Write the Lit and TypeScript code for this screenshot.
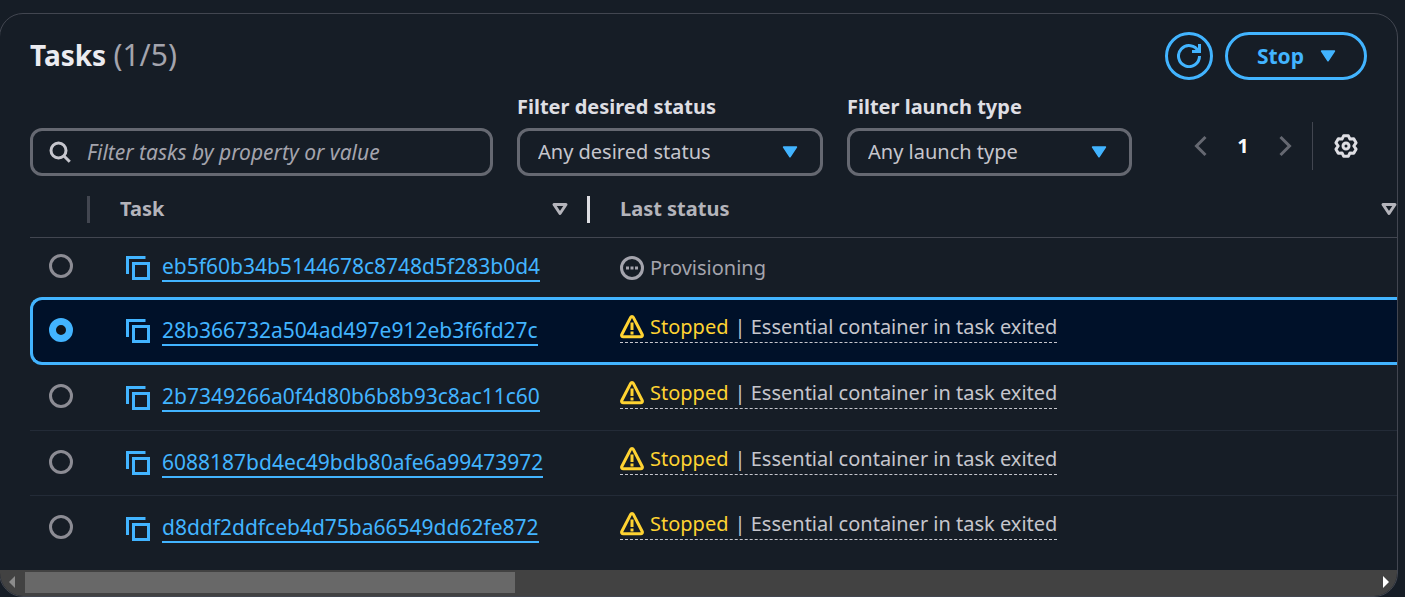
import { LitElement, html, css, svg } from "lit";
import { customElement, state } from "lit/decorators.js";
import { classMap } from "lit/directives/class-map.js";

interface Task {
  id: string;
  status: "Provisioning" | "Stopped";
  reason?: string;
}

const TASKS: Task[] = [
  { id: "eb5f60b34b5144678c8748d5f283b0d4", status: "Provisioning" },
  { id: "28b366732a504ad497e912eb3f6fd27c", status: "Stopped", reason: "Essential container in task exited" },
  { id: "2b7349266a0f4d80b6b8b93c8ac11c60", status: "Stopped", reason: "Essential container in task exited" },
  { id: "6088187bd4ec49bdb80afe6a99473972", status: "Stopped", reason: "Essential container in task exited" },
  { id: "d8ddf2ddfceb4d75ba66549dd62fe872", status: "Stopped", reason: "Essential container in task exited" },
];

const ICONS = {
  refresh: svg`<path d="M10 5h5V0"/><path d="M15 8a7 7 0 1 1-.7-3"/>`,
  search: svg`<circle cx="7" cy="7" r="5"/><path d="m10.500 10.500 4 4"/>`,
  caret: svg`<path class="solid" d="M3.700 4.700h8.600L8 11.200z"/>`,
  sort: svg`<path class="round-join" d="M4 5h8l-4 6z"/>`,
  prev: svg`<path d="M11 2 5 8l6 6"/>`,
  next: svg`<path d="m5 2 6 6-6 6"/>`,
  copy: svg`<path d="M5 5h10v10H5z"/><path d="M13 1H1v11"/>`,
  pending: svg`<circle cx="8" cy="8" r="7"/><path d="M4 8h2M7 8h2M10 8h2"/>`,
  warning: svg`<path class="round-join" d="M7.100 1.600 1.200 13c-.4.8.1 1.500 1 1.500h11.600c.9 0 1.400-.7 1-1.500L8.900 1.600c-.4-.8-1.400-.8-1.800 0Z"/><path d="M8 5v5M8 11v2"/>`,
  gear: svg`<path class="round-join" d="M6.400 1.200h3.200l1.050 2.200 2.500-.2 1.550 2.700L13.200 8l1.500 2.100-1.550 2.700-2.500-.2-1.050 2.200H6.400l-1.050-2.200-2.500.2-1.550-2.700L2.800 8 1.300 5.900l1.550-2.700 2.500.2z"/><circle cx="8" cy="8" r="2"/>`,
};

const icon = (name: keyof typeof ICONS) => html`
  <svg class="icon" viewBox="0 0 16 16" aria-hidden="true">${ICONS[name]}</svg>
`;

@customElement("app-root")
export class AppRoot extends LitElement {
  @state() private selected = TASKS[1].id;

  static styles = css`
    :host {
      display: block;
      box-sizing: border-box;
      min-height: 100vh;
      padding: 13px 7px 0 0;
      overflow: hidden;
      background: #161d26;
      color: #c6c6cd;
      font: 20px/30px "Noto Sans", "Open Sans", sans-serif;
    }
    *, *::before, *::after { box-sizing: border-box; }
    button, input, select { font: inherit; color: inherit; background: none; border: 0; margin: 0; padding: 0; }
    button, select { cursor: pointer; }
    .icon { display: block; flex: none; width: 24px; height: 24px; fill: none; stroke: currentColor; stroke-width: 2; }
    .solid { fill: currentColor; stroke-width: 1; stroke-linejoin: round; }
    .round-join { stroke-linejoin: round; }

    .card {
      overflow: hidden;
      margin-left: -1px;
      border: 1px solid #424650;
      border-radius: 24px;
    }
    .header { display: flex; align-items: flex-start; justify-content: space-between; padding: 18px 30px 0; }
    .title { margin: 5px 0 0; color: #ebebf0; font-size: 28px; line-height: 36px; font-weight: 700; }
    .count { color: #a4a4ad; font-size: 30px; font-weight: 400; }
    .actions { display: flex; gap: 12px; }
    .action {
      display: flex; align-items: center; justify-content: center; gap: 12px;
      height: 48px; border: 3px solid #42b4ff; border-radius: 24px;
      color: #42b4ff; font-weight: 700;
    }
    .round { width: 48px; }
    .menu { padding: 0 24px 0 29px; font-size: 21px; }

    .toolbar { display: flex; align-items: flex-end; gap: 24px; padding: 12px 30px 0; }
    .box { height: 48px; border: 3px solid #656871; border-radius: 12px; }
    .search-box { display: flex; align-items: center; gap: 15px; flex: 0 1 463px; padding: 0 15px; }
    .query { flex: 1; min-width: 0; outline: none; font-size: 21px; }
    .query::placeholder { color: #a4a4ad; opacity: 1; font-style: italic; }
    .filter { display: grid; gap: 6px; }
    .filter-status { flex: 0 1 306px; }
    .filter-launch { flex: 0 1 285px; }
    .label { color: #dedee3; font-weight: 700; }
    .picker { position: relative; }
    .select { display: block; width: 100%; appearance: none; padding: 0 48px 0 18px; }
    .arrow { position: absolute; right: 21px; top: 12px; color: #42b4ff; pointer-events: none; }
    .pager { display: flex; align-items: center; margin: 0 0 6px auto; }
    .pages { display: flex; align-items: center; gap: 18px; padding-right: 15px; border-right: 1px solid #424650; height: 48px; color: #656871; }
    .page { width: 24px; color: #f9f9fb; font-weight: 700; text-align: center; }
    .settings { padding: 0 9px 0 21px; color: #dedee3; }

    .viewport { overflow: hidden; margin-left: 30px; padding-bottom: 9px; }
    .table { width: calc(100% + 30px); table-layout: fixed; border-collapse: separate; border-spacing: 0; }
    .pick { width: 60px; }
    .task { width: 500px; }
    .th { height: 62px; padding: 6px 0 0; border-bottom: 1px solid #424650; color: #b4b4bb; text-align: left; font-weight: 700; line-height: 24px; }
    .th-in { display: flex; align-items: center; justify-content: space-between; height: 27px; padding: 0 15px 1px 30px; border-right: 3px solid #dedee3; }
    .th-in.muted { border-color: #424650; }
    .th-in.last { border: 0; padding-right: 26px; }
    .cell { height: 65px; padding: 0 0 0 30px; border-bottom: 1px solid #232b37; }
    .row:first-child .cell { height: 59px; border-bottom: 0; }
    .row:last-child .cell { border-bottom: 0; }
    .cell.choice { padding: 0 0 3px 19px; }
    .row.active .cell { height: 68px; background: #001129; border: solid #42b4ff; border-width: 3px 0; }
    .row.active + .row .cell { height: 66px; }
    .row.active .choice { padding-left: 16px; border-left-width: 3px; border-radius: 12px 0 0 12px; }
    .radio { display: block; appearance: none; width: 24px; height: 24px; border: 3px solid #8c8c94; border-radius: 50%; }
    .radio:checked { border: 7px solid #42b4ff; background: #0f141a; }
    .ident { display: flex; align-items: center; gap: 12px; padding-left: 6px; color: #42b4ff; }
    .link { color: #42b4ff; font-size: 21px; line-height: 27px; text-decoration: none; border-bottom: 2px solid #42b4ff; }
    .state { display: flex; align-items: center; gap: 6px; color: #a4a4ad; }
    .reason { display: flex; width: max-content; margin-bottom: 8px; border-bottom: 1px dashed #c6c6cd; color: #c6c6cd; line-height: 30px; }
    .reason .state { color: #ffd332; margin-right: 6px; }

    .scrollbar { display: flex; align-items: flex-start; height: 26px; padding: 2px 8px 0 9px; background: #424242; }
    .tip { width: 6px; height: 12px; margin-top: 4px; fill: #8b8b8b; flex: none; }
    .tip.on { fill: #fff; margin-left: auto; }
    .thumb { flex: 0 1 490px; height: 21px; margin-left: 10px; background: #686868; }
  `;

  private renderStatus(t: Task) {
    if (!t.reason) return html`<span class="state">${icon("pending")}${t.status}</span>`;
    return html`
      <button class="reason" type="button">
        <span class="state">${icon("warning")}${t.status}</span>| ${t.reason}
      </button>`;
  }

  private renderRow(t: Task) {
    const active = t.id === this.selected;
    return html`
      <tr class=${classMap({ row: true, active })}>
        <td class="cell choice">
          <input class="radio" type="radio" name="task" aria-label=${t.id} .checked=${active}
            @change=${() => (this.selected = t.id)} />
        </td>
        <td class="cell">
          <div class="ident">
            <button type="button" aria-label="Copy">${icon("copy")}</button>
            <a class="link" href="#${t.id}">${t.id}</a>
          </div>
        </td>
        <td class="cell">${this.renderStatus(t)}</td>
      </tr>`;
  }

  render() {
    return html`
      <section class="card">
        <header class="header">
          <h2 class="title">Tasks <span class="count">(1/5)</span></h2>
          <div class="actions">
            <button class="action round" type="button" aria-label="Refresh">${icon("refresh")}</button>
            <button class="action menu" type="button">Stop ${icon("caret")}</button>
          </div>
        </header>

        <div class="toolbar">
          <label class="box search-box">
            ${icon("search")}
            <input class="query" type="text" aria-label="Filter tasks" placeholder="Filter tasks by property or value" />
          </label>
          <div class="filter filter-status">
            <label class="label" for="status">Filter desired status</label>
            <div class="picker">
              <select class="box select" id="status"><option>Any desired status</option></select>
              <span class="arrow">${icon("caret")}</span>
            </div>
          </div>
          <div class="filter filter-launch">
            <label class="label" for="launch">Filter launch type</label>
            <div class="picker">
              <select class="box select" id="launch"><option>Any launch type</option></select>
              <span class="arrow">${icon("caret")}</span>
            </div>
          </div>
          <div class="pager">
            <div class="pages">
              <button type="button" aria-label="Previous page">${icon("prev")}</button>
              <button class="page" type="button">1</button>
              <button type="button" aria-label="Next page">${icon("next")}</button>
            </div>
            <button class="settings" type="button" aria-label="Preferences">${icon("gear")}</button>
          </div>
        </div>

        <div class="viewport">
          <table class="table">
            <thead>
              <tr>
                <th class="th pick"><div class="th-in muted"></div></th>
                <th class="th task"><div class="th-in">Task ${icon("sort")}</div></th>
                <th class="th"><div class="th-in last">Last status ${icon("sort")}</div></th>
              </tr>
            </thead>
            <tbody>${TASKS.map((t) => this.renderRow(t))}</tbody>
          </table>
        </div>

        <div class="scrollbar" aria-hidden="true">
          <svg class="tip" viewBox="0 0 6 12"><path d="M6 0v12L0 6z" /></svg>
          <div class="thumb"></div>
          <svg class="tip on" viewBox="0 0 6 12"><path d="M0 0v12l6-6z" /></svg>
        </div>
      </section>
    `;
  }
}
